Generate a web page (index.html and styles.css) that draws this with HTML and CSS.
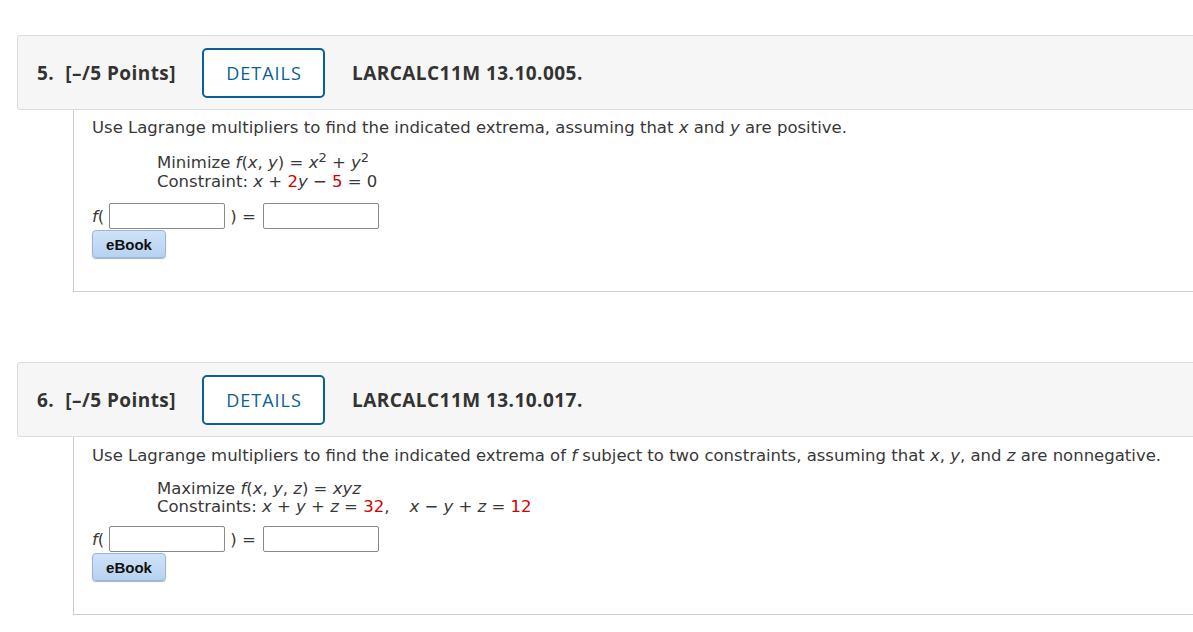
FILE: index.html
```html
<!DOCTYPE html>
<html>
<head>
<meta charset="utf-8">
<link rel="stylesheet" href="styles.css">
</head>
<body>
<div class="page">
  <section class="question">
    <div class="qhead">
      <span class="qnum">5.</span>
      <span class="qpts">[–/5 Points]</span>
      <button class="details">DETAILS</button>
      <span class="qcode">LARCALC11M 13.10.005.</span>
    </div>
    <div class="qbody">
      <p class="prompt">Use Lagrange multipliers to find the indicated extrema, assuming that <i>x</i> and <i>y</i> are positive.</p>
      <div class="math">
        <div class="tall">Minimize <i>f</i>(<i>x</i>, <i>y</i>) = <i>x</i><sup>2</sup> + <i>y</i><sup>2</sup></div>
        <div>Constraint: <i>x</i> + <span class="red">2</span><i>y</i> − <span class="red">5</span> = 0</div>
      </div>
      <div class="answer">
        <i>f</i>(<span class="box first"></span>) = <span class="box"></span>
      </div>
      <button class="ebook">eBook</button>
    </div>
  </section>
  <section class="question second">
    <div class="qhead">
      <span class="qnum">6.</span>
      <span class="qpts">[–/5 Points]</span>
      <button class="details">DETAILS</button>
      <span class="qcode">LARCALC11M 13.10.017.</span>
    </div>
    <div class="qbody">
      <p class="prompt">Use Lagrange multipliers to find the indicated extrema of <i>f</i> subject to two constraints, assuming that <i>x</i>, <i>y</i>, and <i>z</i> are nonnegative.</p>
      <div class="math">
        <div>Maximize <i>f</i>(<i>x</i>, <i>y</i>, <i>z</i>) = <i>xyz</i></div>
        <div>Constraints: <i>x</i> + <i>y</i> + <i>z</i> = <span class="red">32</span>,<span class="sp"></span><i>x</i> − <i>y</i> + <i>z</i> = <span class="red">12</span></div>
      </div>
      <div class="answer">
        <i>f</i>(<span class="box first"></span>) = <span class="box"></span>
      </div>
      <button class="ebook">eBook</button>
    </div>
  </section>
</div>
</body>
</html>
```
FILE: styles.css
```css
html, body {
  margin: 0;
  padding: 0;
  background: #fff;
  overflow: hidden;
}
.page {
  padding-top: 35px;
  padding-left: 17px;
  width: 1300px;
}
.question {
  display: flex;
  flex-direction: column;
}
.question.second {
  margin-top: 70px;
}
.qhead {
  height: 73px;
  border: 1px solid #dcdcdc;
  border-radius: 3px 0 0 3px;
  background: #f6f6f6;
  display: flex;
  align-items: center;
  padding-left: 19px;
  font-family: "Open Sans", "Noto Sans", sans-serif;
  font-weight: 700;
  font-size: 19px;
  letter-spacing: 0.45px;
  color: #333;
}
.qnum {
  margin-right: 11px;
}
.qpts {
  margin-right: 26px;
}
.details {
  width: 123px;
  height: 50px;
  box-sizing: border-box;
  border: 2px solid #0a5f96;
  border-radius: 5px;
  background: #fff;
  color: #0a5f96;
  font-family: "Open Sans", "Noto Sans", sans-serif;
  font-size: 18px;
  font-weight: 400;
  letter-spacing: 1px;
  padding: 0 0 0 1px;
  margin-right: 27px;
}
.qcode {
  color: #333;
}
.qbody {
  margin-left: 56px;
  border-left: 1px solid #cfcfcf;
  border-bottom: 1px solid #cfcfcf;
  padding: 8px 0 0 18px;
  height: 173px;
  font-family: "DejaVu Sans", Verdana, sans-serif;
  font-size: 16.5px;
  color: #383838;
}
.second .qbody {
  padding-top: 9px;
  height: 168px;
}
.prompt {
  margin: 0;
  line-height: 20px;
}
.math {
  margin-top: 15px;
  margin-left: 65px;
  line-height: 18px;
}
.second .math {
  margin-top: 14px;
}
.math .tall {
  line-height: 20px;
}
.math sup {
  font-size: 13px;
  line-height: 0;
  vertical-align: 6px;
}
.red {
  color: #d40000;
}
.sp {
  display: inline-block;
  width: 20px;
}
.answer {
  margin-top: 12px;
  display: flex;
  align-items: center;
  height: 26px;
  white-space: pre;
}
.second .answer {
  margin-top: 10px;
}
.box {
  display: inline-block;
  width: 116px;
  height: 26px;
  box-sizing: border-box;
  border: 1px solid #8a8a8a;
  border-radius: 2px;
  background: #fff;
  margin: 0 2px;
}
.box.first {
  margin: 0 5px 0 5px;
}
.answer i {
  margin-right: 0;
}
.ebook {
  margin-top: 1px;
  width: 74px;
  height: 28px;
  box-sizing: border-box;
  border: 1px solid #9ab5d6;
  border-radius: 4px;
  background: linear-gradient(#cfe2f8, #b7d2f0);
  box-shadow: 0 1px 1px #9fb4cc;
  font-family: "Liberation Sans", Arial, sans-serif;
  font-weight: 700;
  font-size: 15px;
  color: #111;
  padding: 0;
  display: block;
}
```
